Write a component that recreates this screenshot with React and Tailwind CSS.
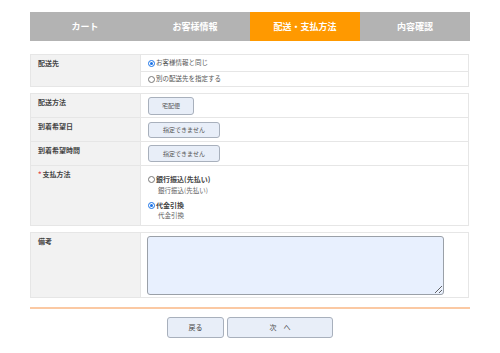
import React from "react";

const font = { fontFamily: '"Noto Sans CJK JP", "Noto Sans", sans-serif' };

function Label({ children, req }) {
  return (
    <div className="w-[110px] shrink-0 bg-[#f2f2f2] px-[7px] pt-[3px] text-[7px] font-bold text-[#444] border-r border-[#e6e6e6]">
      {req && <span className="text-[#e5484d] mr-[1px]">*</span>}
      {children}
    </div>
  );
}

function Btn({ children, w }) {
  return (
    <button className={`${w} rounded-[3px] border border-[#a8b0bc] bg-[#e8eef8] text-[6px] text-[#555]`}>
      {children}
    </button>
  );
}

function Radio({ on }) {
  return (
    <span className={`inline-block h-[7px] w-[7px] rounded-full border ${on ? "border-[#1a73e8] bg-white" : "border-[#777] bg-white"} relative mr-[1px]`}>
      {on && <span className="absolute inset-[1px] rounded-full bg-[#1a73e8]" />}
    </span>
  );
}

export default function App() {
  return (
    <div className="w-[500px] h-[353px] bg-white px-[30px] pt-[12px]" style={font}>
      <div className="flex h-[29px] text-[9px] font-bold text-white">
        <div className="flex w-[110px] items-center justify-center bg-[#b3b3b3]">カート</div>
        <div className="flex w-[110px] items-center justify-center bg-[#b3b3b3]">お客様情報</div>
        <div className="flex w-[110px] items-center justify-center bg-[#ff9900]">配送・支払方法</div>
        <div className="flex w-[110px] items-center justify-center bg-[#b3b3b3]">内容確認</div>
      </div>

      <div className="mt-[13px] mr-[1px] flex border border-[#e6e6e6] h-[33px]">
        <Label>配送先</Label>
        <div className="flex flex-1 flex-col text-[6.5px] text-[#555]">
          <div className="flex h-[17px] items-center border-b border-[#e6e6e6] pl-[7px]">
            <Radio on />お客様情報と同じ
          </div>
          <div className="flex flex-1 items-center pl-[7px]">
            <Radio />別の配送先を指定する
          </div>
        </div>
      </div>

      <div className="mt-[6px] mr-[1px] border border-[#e6e6e6]">
        <div className="flex h-[24px] border-b border-[#e6e6e6]">
          <Label>配送方法</Label>
          <div className="flex flex-1 items-center pl-[7px]">
            <Btn w="w-[46px] h-[18px]">宅配便</Btn>
          </div>
        </div>
        <div className="flex h-[24px] border-b border-[#e6e6e6]">
          <Label>到着希望日</Label>
          <div className="flex flex-1 items-center pl-[7px]">
            <Btn w="w-[72px] h-[16px]">指定できません</Btn>
          </div>
        </div>
        <div className="flex h-[24px] border-b border-[#e6e6e6]">
          <Label>到着希望時間</Label>
          <div className="flex flex-1 items-center pl-[7px]">
            <Btn w="w-[72px] h-[17px]">指定できません</Btn>
          </div>
        </div>
        <div className="flex h-[59px]">
          <Label req>支払方法</Label>
          <div className="flex flex-1 flex-col pl-[7px] pt-[9px] text-[7px] text-[#444]">
            <div className="flex items-center font-bold leading-[8px]"><Radio />銀行振込(先払い)</div>
            <div className="ml-[10px] mt-[3px] text-[6.5px] text-[#666] leading-[8px]">銀行振込(先払い)</div>
            <div className="mt-[7px] flex items-center font-bold leading-[8px]"><Radio on />代金引換</div>
            <div className="ml-[10px] mt-[2px] text-[6.5px] text-[#666] leading-[8px]">代金引換</div>
          </div>
        </div>
      </div>

      <div className="mt-[6px] mr-[1px] flex h-[66px] border border-[#e6e6e6]">
        <Label>備考</Label>
        <div className="flex-1 pl-[6px] pt-[3px]">
          <textarea className="block h-[59px] w-[297px] resize rounded-[3px] border border-[#9aa0a8] bg-[#e8f0fe]" />
        </div>
      </div>

      <div className="mt-[9px] h-[2px] bg-[#fbc9a3]" />

      <div className="mt-[8px] flex justify-center gap-[3px] text-[7px] text-[#444]">
        <button className="h-[21px] w-[57px] rounded-[3px] border border-[#a8b0bc] bg-[#e8eef8]">戻る</button>
        <button className="h-[21px] w-[106px] rounded-[3px] border border-[#a8b0bc] bg-[#e8eef8]">次　へ</button>
      </div>
    </div>
  );
}
